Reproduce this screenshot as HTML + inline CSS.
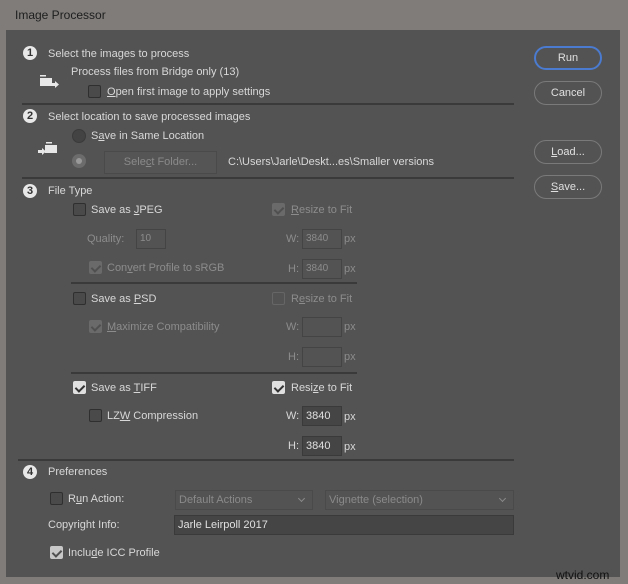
<!DOCTYPE html>
<html><head><style>
*{margin:0;padding:0;box-sizing:border-box}
body{width:628px;height:584px;background:#7f7c7a;position:relative;overflow:hidden;font-family:"Liberation Sans",sans-serif;font-size:11px;color:#d8d8d8}
.a{position:absolute;white-space:nowrap;line-height:14px}
.p{position:absolute;left:6px;top:30px;width:614px;height:547px;background:#535353}
.d{color:#8c8c8c}
.n{position:absolute;width:14px;height:14px;border-radius:50%;background:#e8e8e8;color:#333;font-weight:bold;font-size:11px;line-height:14px;text-align:center}
.cb{position:absolute;width:13px;height:13px;border:1px solid #2f2f2f;background:#4a4a4a;border-radius:2px}
.cb.on{background:#e0e0e0;border-color:#e0e0e0}
.cb.dis{background:#6a6a6a;border-color:#6a6a6a}
.cb.on::after,.cb.dis.ck::after{content:"";position:absolute;left:3px;top:1px;width:4px;height:7px;border:solid #333;border-width:0 2px 2px 0;transform:rotate(45deg)}
.cb.dis.ck::after{border-color:#505050}
.sep{position:absolute;height:2px;background:#3a3a3a}
.in{position:absolute;height:20px;border:1px solid #444;background:#535353;line-height:18px;padding-left:3px;font-size:10px}
.in.on{background:#454545;border-color:#3a3a3a;color:#e0e0e0;font-size:11px}
.btn{position:absolute;left:534px;width:68px;height:24px;border:1px solid #7a7a7a;border-radius:12px;text-align:center;line-height:22px;color:#e0e0e0}
.sel{position:absolute;height:20px;border:1px solid #4a4a4a;line-height:18px;padding-left:3px;color:#8a8a8a}
.sel::after{content:"";position:absolute;right:8px;top:5px;width:4px;height:4px;border:solid #8a8a8a;border-width:0 1px 1px 0;transform:rotate(45deg)}
u{text-decoration:underline}
</style></head><body>
<div class="a" style="left:15px;top:8px;font-size:12px;color:#1e1e1e">Image Processor</div>
<div class="p"></div>

<div class="n" style="left:23px;top:46px">1</div>
<div class="a" style="left:48px;top:47px">Select the images to process</div>
<svg class="a" style="left:39px;top:75px" width="22" height="16"><rect x="1" y="0" width="6" height="1.5" fill="#e8e8e8"/><rect x="1" y="3" width="12" height="8" fill="#e8e8e8"/><path d="M12 8h4v-2l4 3.5-4 3.5v-2h-4z" fill="#e8e8e8"/></svg>
<div class="a" style="left:71px;top:65px">Process files from Bridge only (13)</div>
<div class="cb" style="left:88px;top:85px"></div>
<div class="a" style="left:107px;top:85px"><u>O</u>pen first image to apply settings</div>
<div class="sep" style="left:22px;top:103px;width:492px"></div>

<div class="n" style="left:23px;top:109px">2</div>
<div class="a" style="left:48px;top:110px">Select location to save processed images</div>
<svg class="a" style="left:37px;top:142px" width="22" height="16"><rect x="9" y="0" width="6" height="1.5" fill="#e8e8e8"/><rect x="8" y="3" width="12" height="8" fill="#e8e8e8"/><path d="M1 8h4v-2l4 3.5-4 3.5v-2h-4z" fill="#e8e8e8"/></svg>
<div class="a" style="left:72px;top:129px;width:14px;height:14px;border-radius:50%;background:#434343;border:1px solid #3a3a3a"></div>
<div class="a" style="left:91px;top:129px">S<u>a</u>ve in Same Location</div>
<div class="a" style="left:72px;top:154px;width:14px;height:14px;border-radius:50%;background:#6c6c6c"><div style="position:absolute;left:4px;top:4px;width:6px;height:6px;border-radius:50%;background:#999"></div></div>
<div class="a" style="left:104px;top:151px;width:113px;height:23px;border:1px solid #4a4a4a;background:#555;text-align:center;line-height:21px;color:#8a8a8a">Sele<u>c</u>t Folder...</div>
<div class="a" style="left:228px;top:155px">C:\Users\Jarle\Deskt...es\Smaller versions</div>
<div class="sep" style="left:22px;top:177px;width:492px"></div>

<div class="n" style="left:23px;top:184px">3</div>
<div class="a" style="left:48px;top:184px">File Type</div>

<div class="cb" style="left:73px;top:203px"></div>
<div class="a" style="left:91px;top:203px">Save as <u>J</u>PEG</div>
<div class="cb dis ck" style="left:272px;top:203px"></div>
<div class="a d" style="left:291px;top:203px"><u>R</u>esize to Fit</div>
<div class="a d" style="left:87px;top:232px">Quality:</div>
<div class="in d" style="left:136px;top:229px;width:30px">10</div>
<div class="a d" style="left:286px;top:232px">W:</div>
<div class="in d" style="left:302px;top:229px;width:40px">3840</div>
<div class="a d" style="left:344px;top:232px">px</div>
<div class="cb dis ck" style="left:89px;top:261px"></div>
<div class="a d" style="left:107px;top:261px">Con<u>v</u>ert Profile to sRGB</div>
<div class="a d" style="left:288px;top:262px">H:</div>
<div class="in d" style="left:302px;top:259px;width:40px">3840</div>
<div class="a d" style="left:344px;top:262px">px</div>
<div class="sep" style="left:71px;top:282px;width:286px"></div>

<div class="cb" style="left:73px;top:292px"></div>
<div class="a" style="left:91px;top:292px">Save as <u>P</u>SD</div>
<div class="cb" style="left:272px;top:292px;background:#535353;border-color:#666"></div>
<div class="a d" style="left:291px;top:292px">R<u>e</u>size to Fit</div>
<div class="cb dis ck" style="left:89px;top:320px"></div>
<div class="a d" style="left:107px;top:320px"><u>M</u>aximize Compatibility</div>
<div class="a d" style="left:286px;top:320px">W:</div>
<div class="in d" style="left:302px;top:317px;width:40px"></div>
<div class="a d" style="left:344px;top:320px">px</div>
<div class="a d" style="left:288px;top:350px">H:</div>
<div class="in d" style="left:302px;top:347px;width:40px"></div>
<div class="a d" style="left:344px;top:350px">px</div>
<div class="sep" style="left:71px;top:372px;width:286px"></div>

<div class="cb on" style="left:73px;top:381px"></div>
<div class="a" style="left:91px;top:381px">Save as <u>T</u>IFF</div>
<div class="cb on" style="left:272px;top:381px"></div>
<div class="a" style="left:291px;top:381px">Resi<u>z</u>e to Fit</div>
<div class="cb" style="left:89px;top:409px"></div>
<div class="a" style="left:107px;top:409px">LZ<u>W</u> Compression</div>
<div class="a" style="left:286px;top:409px">W:</div>
<div class="in on" style="left:302px;top:406px;width:40px">3840</div>
<div class="a" style="left:344px;top:410px">px</div>
<div class="a" style="left:288px;top:439px">H:</div>
<div class="in on" style="left:302px;top:436px;width:40px">3840</div>
<div class="a" style="left:344px;top:440px">px</div>
<div class="sep" style="left:18px;top:459px;width:496px"></div>

<div class="n" style="left:23px;top:465px">4</div>
<div class="a" style="left:48px;top:465px">Preferences</div>
<div class="cb" style="left:50px;top:492px"></div>
<div class="a" style="left:68px;top:492px">R<u>u</u>n Action:</div>
<div class="sel" style="left:175px;top:490px;width:138px">Default Actions</div>
<div class="sel" style="left:325px;top:490px;width:189px">Vignette (selection)</div>
<div class="a" style="left:48px;top:518px">Copyright Info:</div>
<div class="in on" style="left:174px;top:515px;width:340px">Jarle Leirpoll 2017</div>
<div class="cb dis ck" style="left:50px;top:546px;background:#c8c8c8;border-color:#c8c8c8"></div>
<div class="a" style="left:68px;top:546px">Inclu<u>d</u>e ICC Profile</div>

<div class="btn" style="top:46px;border-color:#4a7bd0;border-width:2px;line-height:20px">Run</div>
<div class="btn" style="top:81px">Cancel</div>
<div class="btn" style="top:140px"><u>L</u>oad...</div>
<div class="btn" style="top:175px"><u>S</u>ave...</div>

<div class="a" style="left:556px;top:568px;color:#111;font-size:12px">wtvid.com</div>
</body></html>
